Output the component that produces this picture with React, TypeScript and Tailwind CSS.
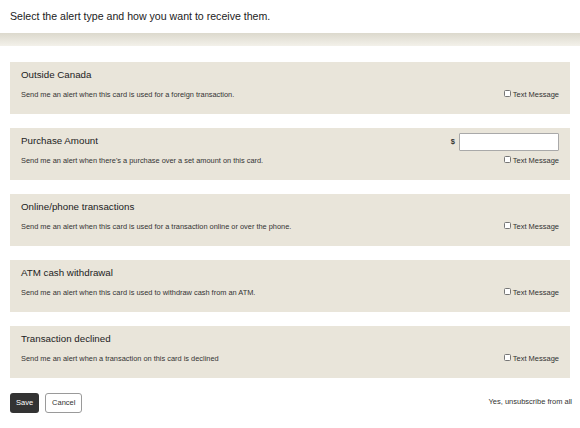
import React from "react";

interface AlertType {
  id: number;
  title: string;
  description: string;
  hasAmount?: boolean;
}

const alertTypes: AlertType[] = [
  {
    id: 1,
    title: "Outside Canada",
    description: "Send me an alert when this card is used for a foreign transaction.",
  },
  {
    id: 2,
    title: "Purchase Amount",
    description: "Send me an alert when there's a purchase over a set amount on this card.",
    hasAmount: true,
  },
  {
    id: 3,
    title: "Online/phone transactions",
    description: "Send me an alert when this card is used for a transaction online or over the phone.",
  },
  {
    id: 4,
    title: "ATM cash withdrawal",
    description: "Send me an alert when this card is used to withdraw cash from an ATM.",
  },
  {
    id: 5,
    title: "Transaction declined",
    description: "Send me an alert when a transaction on this card is declined",
  },
];

const AlertCard: React.FC<{ item: AlertType }> = ({ item }) => {
  return (
    <div className="mx-[10px] h-[52px] bg-[#e9e5da] pl-[11px] pr-[11px] flex flex-col">
      {/* Title row */}
      <div className="h-[26px] flex items-center justify-between">
        <span className="text-[9.75px] leading-none text-[#222]">{item.title}</span>
        {item.hasAmount && (
          <div className="flex items-center gap-[4px] pt-[2px]">
            <span className="text-[7.5px] font-bold text-[#333]">$</span>
            <div className="w-[100px] h-[18px] bg-white border border-[#a9a9a9] rounded-[1px]"></div>
          </div>
        )}
      </div>

      {/* Description row */}
      <div className="h-[14px] flex items-center justify-between">
        <span className="text-[7.4px] leading-none text-[#333]">{item.description}</span>
        <label className="flex items-center gap-[2px] text-[7.5px] leading-none text-[#333]">
          <span className="w-[7px] h-[7px] bg-white border border-[#767676] rounded-[1.5px] mb-[3px]"></span>
          Text Message
        </label>
      </div>
    </div>
  );
};

const App: React.FC = () => {
  return (
    <div className="w-[580px] h-[428px] bg-white overflow-hidden font-['Liberation_Sans',Arial,sans-serif]">
      {/* Header */}
      <div className="h-[33px] flex items-center pl-[10px]">
        <h1 className="text-[10.6px] leading-none text-[#222] font-normal">
          Select the alert type and how you want to receive them.
        </h1>
      </div>
      <div className="h-[13px] bg-gradient-to-b from-[#dcd9cd] to-[#f3f1ea]"></div>

      {/* Alert cards */}
      <div className="flex flex-col gap-[14px] pt-[16px]">
        {alertTypes.map((item) => (
          <AlertCard key={item.id} item={item} />
        ))}
      </div>

      {/* Footer actions */}
      <div className="mt-[15px] ml-[10px] mr-[8px] flex items-center justify-between">
        <div className="flex items-center gap-[6px]">
          <button className="h-[20px] px-[6px] bg-[#333] text-white text-[7.5px] leading-none rounded-[3px]">
            Save
          </button>
          <button className="h-[20px] px-[6px] bg-white border border-[#9a9a9a] text-[#333] text-[7.5px] leading-none rounded-[3px]">
            Cancel
          </button>
        </div>
        <span className="text-[7.5px] leading-none text-[#333] mb-[2px]">Yes, unsubscribe from all</span>
      </div>
    </div>
  );
};

export default App;
